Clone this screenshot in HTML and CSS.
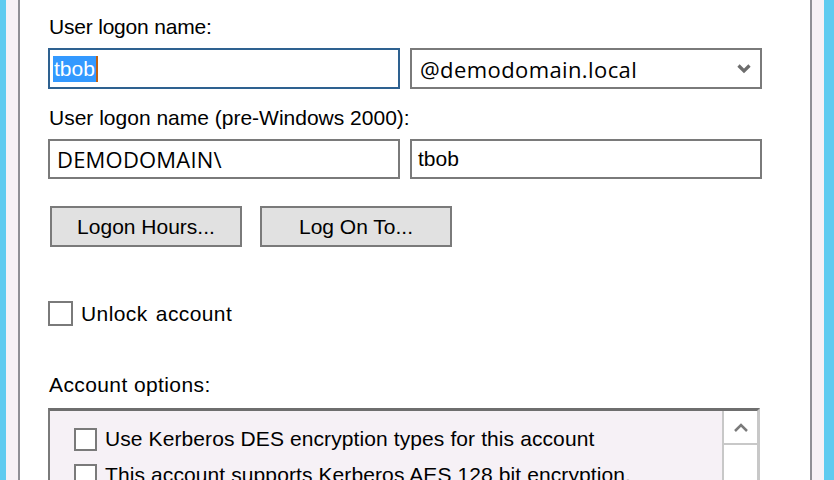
FILE: index.html
```html
<!DOCTYPE html>
<html lang="en">
<head>
    <meta charset="UTF-8">
    <meta name="viewport" content="width=device-width, initial-scale=1.0">
    <title>Account</title>
    <link rel="stylesheet" href="styles.css">
</head>
<body>
    <div class="frame">
        <div class="edge edge-left"></div>
        <div class="gutter"></div>
        <div class="rule"></div>

        <div class="page">
            <div class="label first">User logon name:</div>
            <div class="row">
                <div class="field focused"><span class="selected">tbob</span><span class="caret"></span></div>
                <div class="field combo">
                    <span>@demodomain.local</span>
                    <svg class="chevron" width="14" height="10" viewBox="0 0 14 10">
                        <path d="M1.5 1.5 L7 7 L12.5 1.5" fill="none" stroke="#6d6d6d" stroke-width="3.2"/>
                    </svg>
                </div>
            </div>

            <div class="label">User logon name (pre-Windows 2000):</div>
            <div class="row">
                <div class="field smooth">DEMODOMAIN\</div>
                <div class="field">tbob</div>
            </div>

            <div class="buttons">
                <button class="btn">Logon Hours...</button>
                <button class="btn">Log On To...</button>
            </div>

            <label class="check">
                <span class="box"></span>
                <span>Unlock account</span>
            </label>

            <div class="label options">Account options:</div>
            <div class="listbox">
                <div class="items">
                    <div class="item"><span class="box small"></span>Use Kerberos DES encryption types for this account</div>
                    <div class="item"><span class="box small"></span>This account supports Kerberos AES 128 bit encryption.</div>
                </div>
                <div class="scrollbar">
                    <div class="arrow">
                        <svg width="14" height="9" viewBox="0 0 14 9">
                            <path d="M1 8 L7 2 L13 8" fill="none" stroke="#7a7a7a" stroke-width="2.5"/>
                        </svg>
                    </div>
                </div>
            </div>
        </div>

        <div class="rule"></div>
        <div class="gutter"></div>
        <div class="edge edge-right"></div>
    </div>
</body>
</html>
```

FILE: styles.css
```css
body {
    margin: 0;
    padding: 0;
    font-family: "Liberation Sans", Arial, sans-serif;
    font-size: 21px;
    color: #000;
    background-color: #fff;
    overflow: hidden;
}
.frame {
    display: flex;
    height: 480px;
}
.edge {
    background-color: #5fcbf0;
}
.edge-left {
    width: 6px;
}
.edge-right {
    width: 10px;
}
.gutter {
    width: 12px;
    background-color: #f6f1f6;
}
.rule {
    width: 2px;
    background-color: #8f8f96;
}
.page {
    flex: 1;
    background-color: #fff;
    padding-left: 28px;
    display: flex;
    flex-direction: column;
    align-items: flex-start;
}
.label {
    height: 24px;
    line-height: 24px;
    margin-left: 1px;
    margin-bottom: 9px;
    margin-top: 17px;
}
.label.first {
    margin-top: 15px;
    letter-spacing: -0.2px;
}
.label.options {
    margin-top: 47px;
    margin-bottom: 11px;
    letter-spacing: 0.4px;
}
.row {
    display: flex;
    gap: 10px;
}
.field {
    box-sizing: border-box;
    width: 352px;
    height: 41px;
    border: 2px solid #7a7a7a;
    padding: 0 6px;
    display: flex;
    align-items: center;
    background-color: #fff;
}
.row + .label + .row .field {
    height: 40px;
}
.field.focused {
    border-color: #2e6190;
    padding-left: 3px;
}
.selected {
    background-color: #3399ff;
    color: #fff;
    line-height: 26px;
    padding: 0 1px;
}
.caret {
    width: 2px;
    height: 26px;
    background-color: #c06010;
}
.field.combo,
.field.smooth {
    font-family: "Open Sans", "DejaVu Sans", sans-serif;
    font-size: 22px;
}
.field.combo {
    justify-content: space-between;
    padding-left: 8px;
    padding-right: 9px;
    letter-spacing: 0.4px;
}
.field.smooth {
    padding-left: 7px;
    letter-spacing: 0.2px;
}
.buttons {
    display: flex;
    gap: 18px;
    margin-top: 27px;
    margin-left: 2px;
}
.btn {
    box-sizing: border-box;
    width: 192px;
    height: 41px;
    border: 2px solid #7a7a7a;
    background-color: #e1e1e1;
    font-family: inherit;
    font-size: 21px;
    padding: 0;
    color: #000;
}
.check {
    display: flex;
    align-items: center;
    gap: 8px;
    margin-top: 54px;
    letter-spacing: 0.4px;
    word-spacing: 2px;
}
.box {
    box-sizing: border-box;
    width: 25px;
    height: 25px;
    border: 2px solid #7a7a7a;
    background-color: #fff;
}
.box.small {
    width: 23px;
    height: 23px;
    margin-right: 8px;
}
.listbox {
    box-sizing: border-box;
    width: 712px;
    height: 80px;
    display: flex;
    border-top: 3px solid #6e6e6e;
    border-left: 2px solid #7a7a7a;
    border-right: 3px solid #c8c8c8;
    background-color: #f6f1f6;
}
.items {
    flex: 1;
    padding-top: 10px;
    padding-left: 24px;
    white-space: nowrap;
    overflow: hidden;
}
.item {
    display: flex;
    align-items: center;
    height: 36px;
    letter-spacing: 0.1px;
}
.scrollbar {
    width: 33px;
    background-color: #fff;
    border-left: 2px solid #c8c8c8;
}
.arrow {
    height: 32px;
    border-bottom: 2px solid #c8c8c8;
    display: flex;
    align-items: center;
    justify-content: center;
}
```
